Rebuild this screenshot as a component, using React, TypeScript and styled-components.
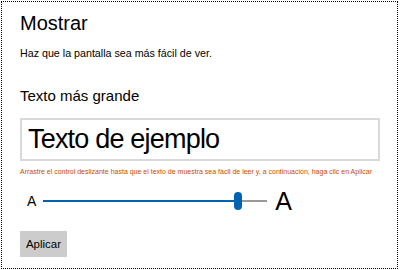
import React, { useState } from "react";
import styled, { createGlobalStyle } from "styled-components";

const GlobalStyle = createGlobalStyle`
  html, body {
    margin: 0;
    padding: 0;
    background: #ffffff;
  }
  body {
    font-family: "Liberation Sans", Arial, sans-serif;
    color: #000000;
  }
`;

const Frame = styled.div`
  box-sizing: border-box;
  width: 397px;
  height: 268px;
  margin: 1px 0 0 1px;
  border: 1px dotted #000000;
  padding: 8px 0 0 18px;
  display: flex;
  flex-direction: column;
`;

const Title = styled.h1`
  margin: 0;
  font-size: 20px;
  font-weight: 400;
  line-height: 26px;
`;

const Subtitle = styled.p`
  margin: 10px 0 0;
  font-size: 10.7px;
  line-height: 14px;
`;

const SectionTitle = styled.h2`
  margin: 26px 0 0;
  font-size: 15px;
  font-weight: 400;
  line-height: 20px;
`;

const Sample = styled.div`
  box-sizing: border-box;
  width: 360px;
  height: 43px;
  margin-top: 12px;
  border: 2px solid #d9d9d9;
  padding: 0 6px;
  display: flex;
  align-items: center;
  font-size: 27px;
  letter-spacing: -0.8px;
`;

const Hint = styled.p`
  margin: 6px 0 0;
  font-size: 7px;
  line-height: 10px;
  color: #c84c00;
  white-space: nowrap;
`;

const SliderRow = styled.div`
  display: flex;
  align-items: center;
  height: 26px;
  margin-top: 11px;
  padding-left: 7px;
`;

const Letter = styled.span<{ $size: number }>`
  font-size: ${({ $size }) => $size}px;
  line-height: 1;
`;

const Track = styled.div`
  position: relative;
  width: 224px;
  height: 2px;
  margin: 0 8px 0 7px;
  background: #999999;
`;

const Fill = styled.div`
  height: 100%;
  background: #0063b1;
`;

const Thumb = styled.div`
  position: absolute;
  top: -8px;
  width: 8px;
  height: 18px;
  border-radius: 4px;
  background: #0063b1;
  transform: translateX(-4px);
`;

const ApplyButton = styled.button`
  align-self: flex-start;
  margin-top: 17px;
  width: 47px;
  height: 26px;
  border: none;
  padding: 0;
  background: #cccccc;
  font-family: "Liberation Sans", Arial, sans-serif;
  font-size: 11.5px;
  color: #000000;
`;

export default function App() {
  const [value] = useState(87);

  return (
    <>
      <GlobalStyle />
      <Frame>
        <Title>Mostrar</Title>
        <Subtitle>Haz que la pantalla sea más fácil de ver.</Subtitle>
        <SectionTitle>Texto más grande</SectionTitle>
        <Sample>Texto de ejemplo</Sample>
        <Hint>
          Arrastre el control deslizante hasta que el texto de muestra sea fácil de leer y, a continuación, haga clic en Aplicar
        </Hint>
        <SliderRow>
          <Letter $size={14}>A</Letter>
          <Track>
            <Fill style={{ width: `${value}%` }} />
            <Thumb style={{ left: `${value}%` }} />
          </Track>
          <Letter $size={25}>A</Letter>
        </SliderRow>
        <ApplyButton>Aplicar</ApplyButton>
      </Frame>
    </>
  );
}
